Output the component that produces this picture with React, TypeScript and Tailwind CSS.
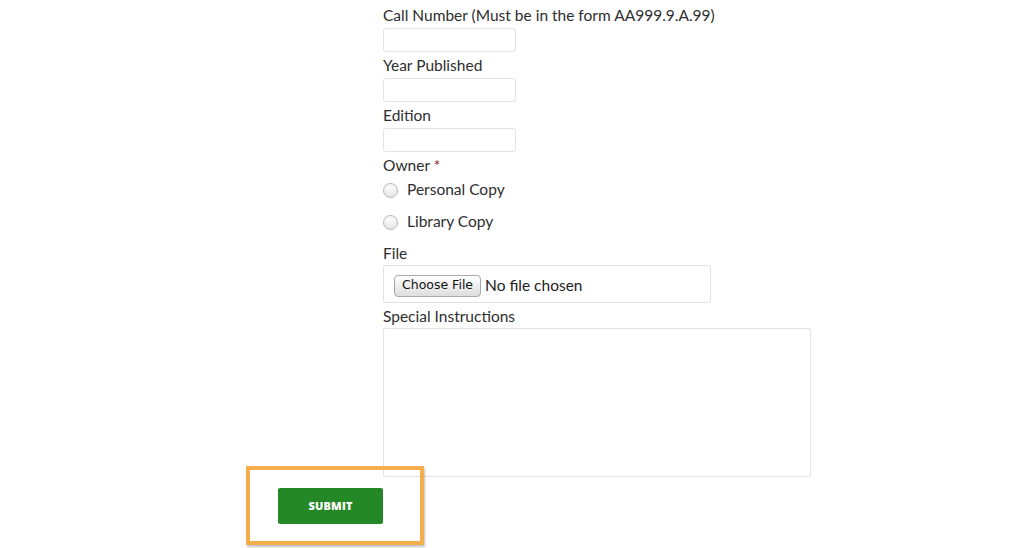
import React from "react";

const labelCls = "block text-[15.5px] leading-5 text-[#2e2e2e]";
const inputCls = "block w-[133px] h-[24px] border border-[#e3e3e3] rounded-[3px] bg-white mt-[3px]";

function Radio({ label }: { label: string }) {
  return (
    <label className="flex items-center h-[32px]">
      <span className="w-[15px] h-[15px] rounded-full border border-[#b5b5b5] bg-gradient-to-b from-white to-[#e6e6e6] shadow-[inset_0_1px_1px_rgba(0,0,0,0.05)]" />
      <span className="ml-[9px] text-[15.5px] text-[#2e2e2e]">{label}</span>
    </label>
  );
}

export default function App() {
  return (
    <div className="min-h-[548px] bg-white" style={{ fontFamily: "Lato, 'Noto Sans', sans-serif" }}>
      <div className="ml-[383px] pt-[5px]">
        <span className={labelCls}>Call Number (Must be in the form AA999.9.A.99)</span>
        <div className={inputCls} />
        <span className={labelCls + " mt-[3px]"}>Year Published</span>
        <div className={inputCls} />
        <span className={labelCls + " mt-[3px]"}>Edition</span>
        <div className={inputCls} />
        <span className={labelCls + " mt-[3px]"}>
          Owner <span className="text-[#8b1a1a]">*</span>
        </span>
        <div className="mt-[-1px]">
          <Radio label="Personal Copy" />
          <Radio label="Library Copy" />
        </div>
        <span className={labelCls + " mt-[5px]"}>File</span>
        <div className="mt-[2px] w-[328px] h-[38px] border border-[#e3e3e3] rounded-[3px] flex items-center pl-[10px] pt-[3px]">
          <span
            className="h-[22px] px-[7px] flex items-center text-[#111] border border-[#a9a9a9] rounded-[4px] bg-gradient-to-b from-white to-[#dedede]"
            style={{ fontFamily: "'DejaVu Sans', sans-serif", fontSize: "12.5px" }}
          >
            Choose File
          </span>
          <span className="ml-[4px] text-[15.5px] text-[#222]">No file chosen</span>
        </div>
        <span className={labelCls + " mt-[3px]"}>Special Instructions</span>
        <div className="mt-[2px] w-[428px] h-[149px] border border-[#e3e3e3] rounded-[2px] bg-white" />
      </div>
      <div className="relative ml-[246px] mt-[-11px] w-[178px] h-[79px]">
        <div className="absolute inset-0 border-4 border-[#f5ae4b] shadow-[1px_2px_2px_rgba(0,0,0,0.25)]" />
        <div className="absolute left-[32px] top-[22px] w-[105px] h-[36px] bg-[#248826] rounded-[2px] flex items-center justify-center text-white text-[11px] font-extrabold tracking-[0.2px]" style={{ fontFamily: "'Open Sans', sans-serif" }}>
          SUBMIT
        </div>
      </div>
    </div>
  );
}
